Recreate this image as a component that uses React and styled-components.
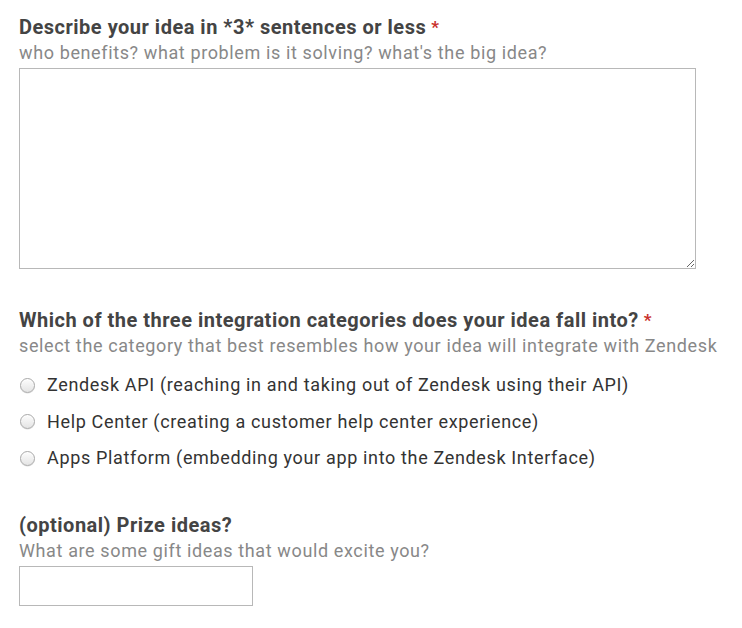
import React from 'react';
import styled, { createGlobalStyle } from 'styled-components';

const Global = createGlobalStyle`
  body {
    margin: 0;
    background: #fff;
    font-family: Roboto, "Liberation Sans", Arial, sans-serif;
  }
`;

const Form = styled.form`
  padding: 14px 19px 16px;
`;

const Field = styled.div`
  margin-bottom: ${p => p.gap || 38}px;
  &:last-child {
    margin-bottom: 0;
  }
`;

const Label = styled.div`
  font-size: 20px;
  font-weight: 700;
  color: #444;
  line-height: 26px;
  letter-spacing: 0.5px;
  white-space: nowrap;
`;

const Star = styled.span`
  color: #c9302c;
  font-size: 17px;
  margin-left: 5px;
  vertical-align: top;
`;

const Hint = styled.div`
  font-size: 18px;
  color: #888;
  line-height: 26px;
  letter-spacing: 0.62px;
  margin-bottom: 2px;
  white-space: nowrap;
`;

const TextArea = styled.textarea`
  display: block;
  box-sizing: border-box;
  width: 677px;
  height: 201px;
  border: 1px solid #b8b8b8;
  margin: 0;
  padding: 6px;
  font: inherit;
  resize: vertical;
`;

const Options = styled.div`
  display: flex;
  flex-direction: column;
  gap: 10.5px;
  margin-top: 13px;
`;

const Option = styled.label`
  display: flex;
  align-items: center;
  gap: 12px;
  font-size: 18px;
  color: #333;
  line-height: 26px;
  letter-spacing: 0.65px;
  white-space: nowrap;
`;

const Radio = styled.input`
  appearance: none;
  box-sizing: border-box;
  margin: 0 0 0 1px;
  width: 15px;
  height: 15px;
  border-radius: 50%;
  border: 1px solid #a9a9a9;
  background: linear-gradient(#fdfdfd, #e4e4e4);
  box-shadow: inset 0 1px 1px rgba(255, 255, 255, 0.8), 0 0.5px 0.5px rgba(0, 0, 0, 0.15);
  &:checked {
    background: radial-gradient(circle, #fff 0 3px, #3b8df2 3.5px);
    border-color: #2f7bd9;
  }
`;

const Input = styled.input`
  display: block;
  box-sizing: border-box;
  width: 234px;
  height: 40px;
  border: 1px solid #b8b8b8;
  margin: 0;
  padding: 6px;
  font: inherit;
`;

const options = [
  'Zendesk API (reaching in and taking out of Zendesk using their API)',
  'Help Center (creating a customer help center experience)',
  'Apps Platform (embedding your app into the Zendesk Interface)',
];

export default function App() {
  return (
    <>
      <Global />
      <Form>
        <Field>
          <Label>Describe your idea in *3* sentences or less<Star>*</Star></Label>
          <Hint>who benefits? what problem is it solving? what's the big idea?</Hint>
          <TextArea />
        </Field>
        <Field gap={41}>
          <Label>Which of the three integration categories does your idea fall into?<Star>*</Star></Label>
          <Hint>select the category that best resembles how your idea will integrate with Zendesk</Hint>
          <Options>
            {options.map(o => (
              <Option key={o}>
                <Radio type="radio" name="category" />
                {o}
              </Option>
            ))}
          </Options>
        </Field>
        <Field>
          <Label>(optional) Prize ideas?</Label>
          <Hint>What are some gift ideas that would excite you?</Hint>
          <Input type="text" />
        </Field>
      </Form>
    </>
  );
}
